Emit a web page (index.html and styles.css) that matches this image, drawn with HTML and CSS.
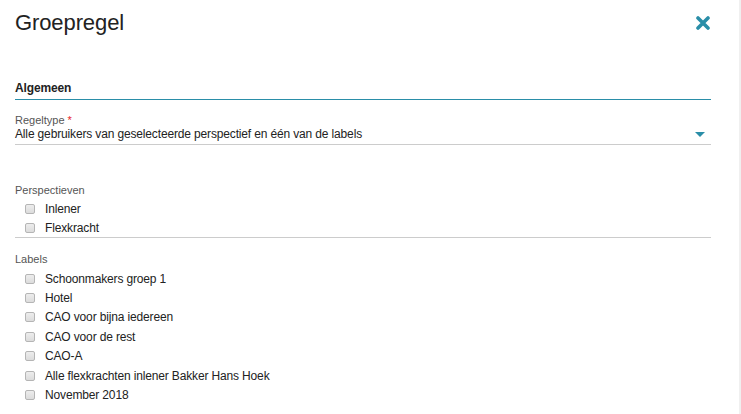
FILE: index.html
```html
<!DOCTYPE html>
<html lang="nl">
<head>
	<meta charset="UTF-8">
	<meta name="viewport" content="width=device-width, initial-scale=1.0">
	<title>Groepregel</title>
	<link rel="stylesheet" href="styles.css">
</head>
<body>
	<div class="panel">
		<div class="header">
			<h1 class="title">Groepregel</h1>
			<a href="#" class="close" title="Sluiten">
				<svg width="14" height="14" viewBox="0 0 14 14">
					<path d="M2 2 L12 12 M12 2 L2 12" stroke="#2a8ea8" stroke-width="3.6" stroke-linecap="round"/>
				</svg>
			</a>
		</div>

		<div class="section-title">Algemeen</div>

		<div class="field">
			<label class="field-label">Regeltype <span class="required">*</span></label>
			<div class="select">
				<span>Alle gebruikers van geselecteerde perspectief en één van de labels</span>
				<span class="caret"></span>
			</div>
		</div>

		<div class="group">
			<div class="field-label">Perspectieven</div>
			<label class="check"><input type="checkbox"><span>Inlener</span></label>
			<label class="check"><input type="checkbox"><span>Flexkracht</span></label>
		</div>

		<div class="group labels">
			<div class="field-label">Labels</div>
			<label class="check"><input type="checkbox"><span>Schoonmakers groep 1</span></label>
			<label class="check"><input type="checkbox"><span>Hotel</span></label>
			<label class="check"><input type="checkbox"><span>CAO voor bijna iedereen</span></label>
			<label class="check"><input type="checkbox"><span>CAO voor de rest</span></label>
			<label class="check"><input type="checkbox"><span>CAO-A</span></label>
			<label class="check"><input type="checkbox"><span>Alle flexkrachten inlener Bakker Hans Hoek</span></label>
			<label class="check"><input type="checkbox"><span>November 2018</span></label>
		</div>
	</div>
</body>
</html>
```

FILE: styles.css
```css
body {
	margin: 0;
	padding: 0;
	background-color: #fff;
	color: #222;
	font-family: "Liberation Sans", Arial, sans-serif;
	font-size: 12px;
	letter-spacing: -0.15px;
	overflow: hidden;
	border-right: 2px solid #f0f0f0;
	height: 414px;
	box-sizing: border-box;
}

.panel {
	width: 696px;
	padding: 0 15px;
}

.header {
	display: flex;
	justify-content: space-between;
	align-items: center;
	height: 46px;
}
.title {
	margin: 0;
	font-size: 22px;
	font-weight: normal;
	letter-spacing: -0.1px;
	color: #222;
}
.close {
	display: flex;
	margin-right: 1px;
}

.section-title {
	margin-top: 35px;
	font-weight: bold;
	font-size: 12px;
	padding-bottom: 4px;
	border-bottom: 1px solid #2a8ea8;
}

.field {
	margin-top: 13px;
}
.field-label {
	color: #555;
	font-size: 11px;
	letter-spacing: 0;
	margin-bottom: 6px;
}
.required {
	color: #e8232b;
}

.select {
	display: flex;
	justify-content: space-between;
	align-items: center;
	padding-bottom: 3px;
	border-bottom: 1px solid #ccc;
}
.caret {
	width: 0;
	height: 0;
	border-left: 5px solid transparent;
	border-right: 5px solid transparent;
	border-top: 5px solid #2a8ea8;
	margin-right: 6px;
}

.group {
	margin-top: 39px;
	border-bottom: 1px solid #ccc;
}
.group .field-label {
	margin-bottom: 3px;
}
.group.labels {
	margin-top: 15px;
	border-bottom: none;
}
.group.labels .field-label {
	margin-bottom: 4px;
}
.group.labels .check {
	height: 19.4px;
}

.check {
	display: flex;
	align-items: center;
	height: 19px;
	padding-left: 10px;
	color: #222;
}
.check input {
	-webkit-appearance: none;
	appearance: none;
	margin: 0 10px 0 0;
	width: 10px;
	height: 10px;
	border: 1px solid #b5b5b5;
	border-radius: 2px;
	background: linear-gradient(#ededed, #dcdcdc);
}
```
